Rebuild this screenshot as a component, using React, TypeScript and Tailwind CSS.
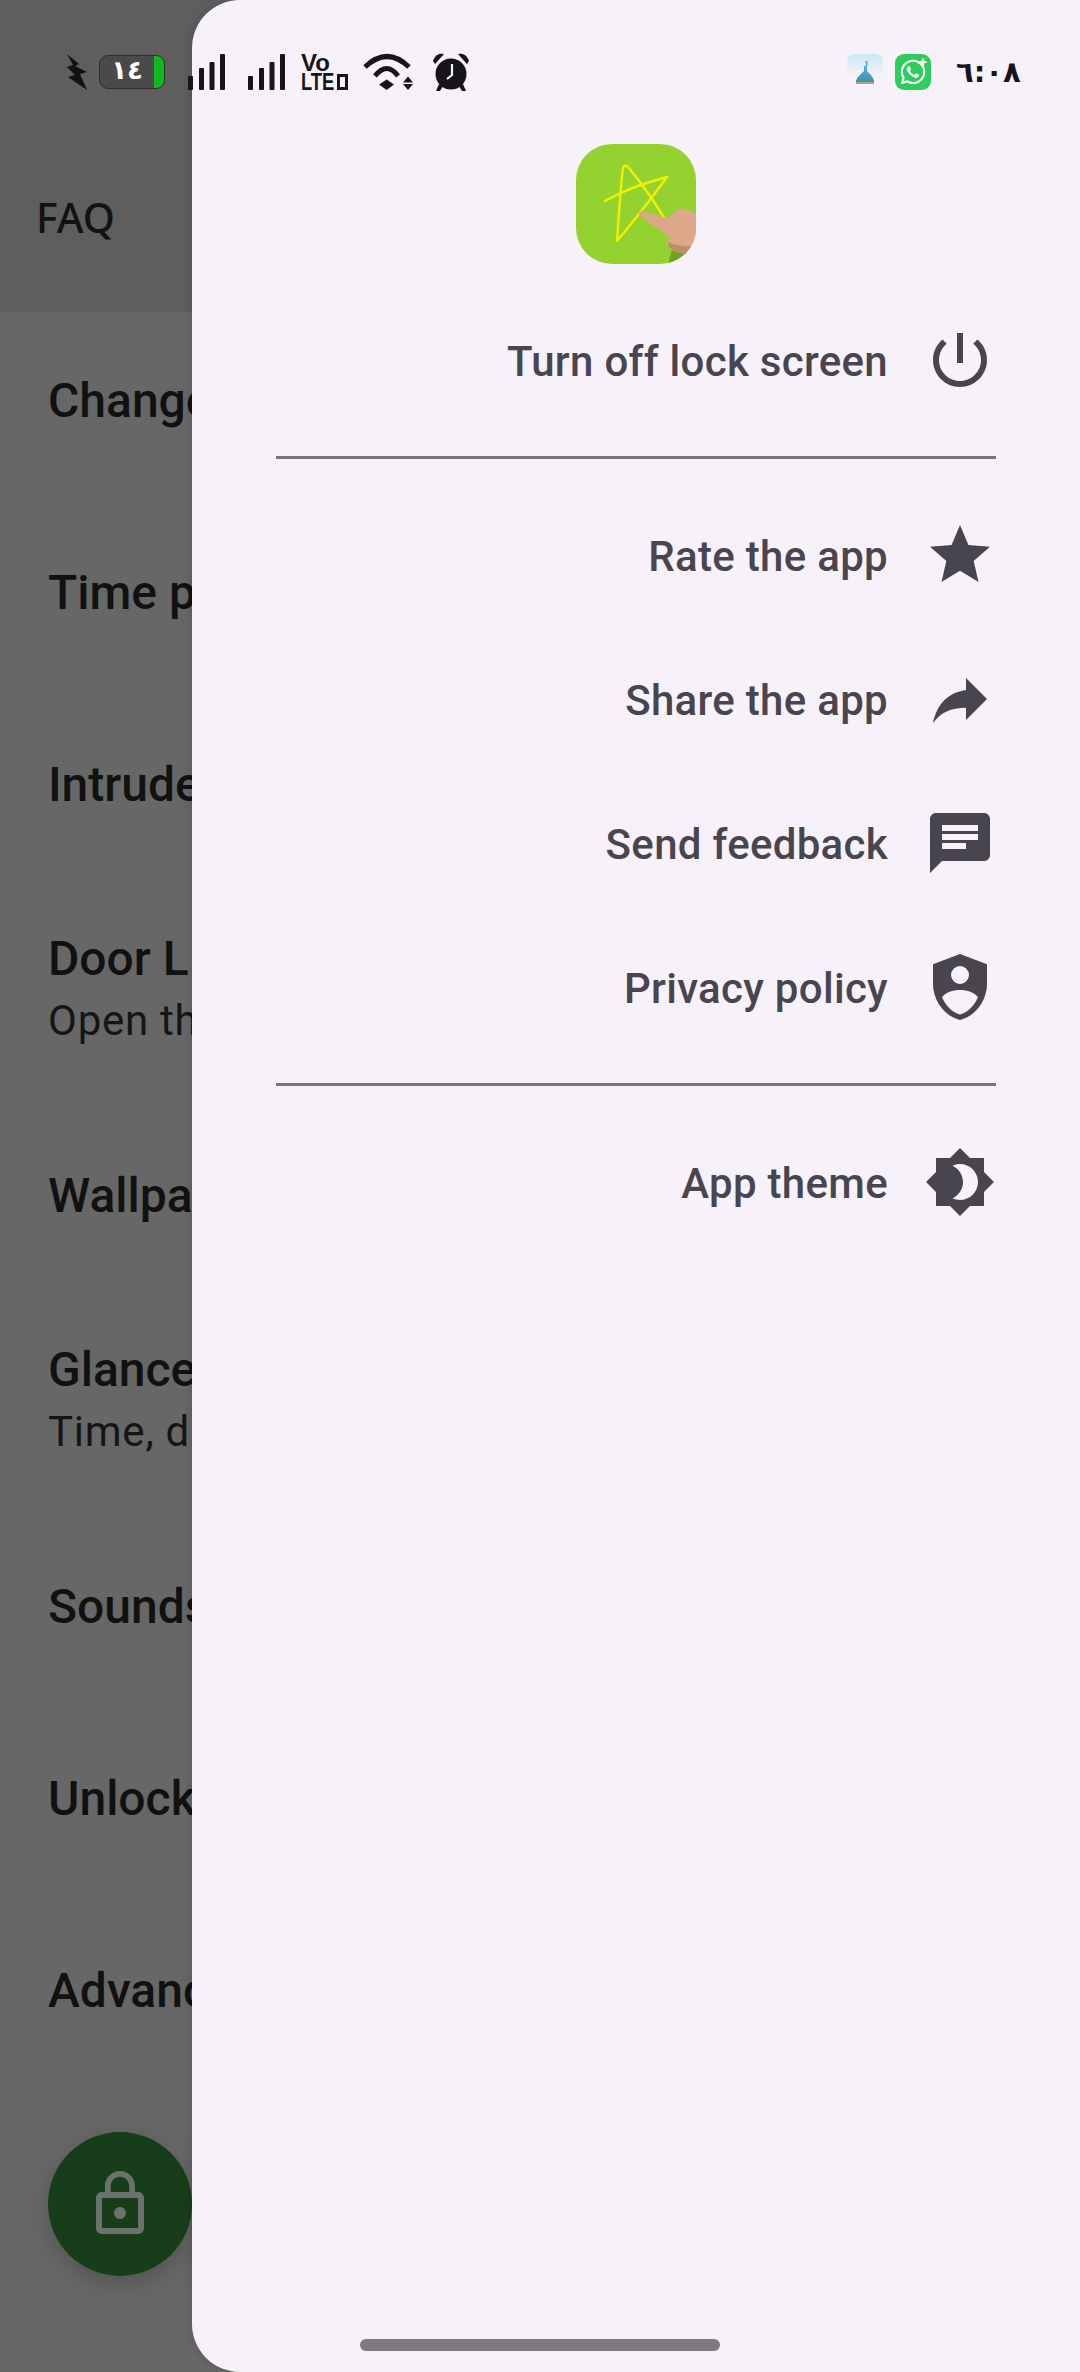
import { FaWhatsapp } from 'react-icons/fa'

const rows = [
  { title: 'Change' },
  { title: 'Time p' },
  { title: 'Intrude' },
  { title: 'Door L', sub: 'Open th' },
  { title: 'Wallpa' },
  { title: 'Glance', sub: 'Time, da' },
  { title: 'Sounds' },
  { title: 'Unlock' },
  { title: 'Advanc' },
]

function MenuIcon({ d, rule }: { d: string; rule?: 'evenodd' }) {
  return (
    <svg width="72" height="72" viewBox="0 0 24 24" fill="#49454f" fillRule={rule} className="shrink-0">
      <path d={d} />
    </svg>
  )
}

const menuTop = { label: 'Turn off lock screen', d: 'M13 3h-2v10h2V3zm4.83 2.17l-1.42 1.42C17.99 7.86 19 9.81 19 12c0 3.87-3.13 7-7 7s-7-3.13-7-7c0-2.19 1.01-4.14 2.58-5.42L6.17 5.17C4.23 6.82 3 9.26 3 12c0 4.97 4.03 9 9 9s9-4.03 9-9c0-2.74-1.23-5.18-3.17-6.83z' }

const menuMiddle = [
  { label: 'Rate the app', d: 'M12 17.27L18.18 21l-1.64-7.03L22 9.24l-7.19-.61L12 2 9.19 8.63 2 9.24l5.46 4.73L5.82 21z' },
  { label: 'Share the app', d: 'M14 9V5l7 7-7 7v-4.1c-5 0-8.5 1.6-11 5.1 1-5 4-10 11-11z' },
  { label: 'Send feedback', d: 'M20 2H4c-1.1 0-1.99.9-1.99 2L2 22l4-4h14c1.1 0 2-.9 2-2V4c0-1.1-.9-2-2-2zM6 9h12v2H6V9zm8 5H6v-2h8v2zm4-6H6V6h12v2z' },
  { label: 'Privacy policy', rule: 'evenodd' as const, d: 'M12 1 3 4.4V11c0 5.5 3.8 10.7 9 12 5.2-1.3 9-6.5 9-12V4.4L12 1zM12 5a3 3 0 1 1 0 6 3 3 0 0 1 0-6zM12 13c2.5 0 4.7.9 6 2.3-1.1 2.8-3.3 5-6 5.9-2.7-.9-4.9-3.1-6-5.9 1.3-1.4 3.5-2.3 6-2.3z' },
]

const menuBottom = { label: 'App theme', d: 'M20 8.69V4h-4.69L12 .69 8.69 4H4v4.69L.69 12 4 15.31V20h4.69L12 23.31 15.31 20H20v-4.69L23.31 12 20 8.69zM12 18c-.89 0-1.74-.2-2.5-.55C11.56 16.5 13 14.42 13 12s-1.44-4.5-3.5-5.45C10.26 6.2 11.11 6 12 6c3.31 0 6 2.69 6 6s-2.69 6-6 6z' }

function MenuRow({ label, d, rule }: { label: string; d: string; rule?: 'evenodd' }) {
  return (
    <div className="flex h-[144px] items-center justify-end gap-[36px]">
      <span className="pt-[3px] text-[42px] leading-none font-medium tracking-[0.3px] text-[#49454f]">{label}</span>
      <MenuIcon d={d} rule={rule} />
    </div>
  )
}

function Signal() {
  return (
    <svg width="38" height="36" viewBox="0 0 38 36" fill="#17151a" className="shrink-0">
      <rect x="0" y="22" width="5" height="14" rx="1" />
      <rect x="11" y="14" width="5" height="22" rx="1" />
      <rect x="21.5" y="8" width="5" height="28" rx="1" />
      <rect x="32" y="0" width="5" height="36" rx="1" />
    </svg>
  )
}

function Logo() {
  return (
    <svg width="120" height="120" viewBox="0 0 120 120">
      <defs>
        <clipPath id="logoClip">
          <rect width="120" height="120" rx="36" />
        </clipPath>
      </defs>
      <g clipPath="url(#logoClip)">
        <rect width="120" height="120" fill="#93d22f" />
        <path d="M92 120 96 106 120 112V120Z" fill="#4f7a18" opacity="0.55" />
        <path
          d="M29 57C48 46 72 38 91 33 75 55 57 78 41 97 43 72 44 45 47 24 48 21 51 21 53 24 66 40 78 57 89 75"
          fill="none"
          stroke="#f2f000"
          strokeWidth="2.4"
          strokeLinecap="round"
          strokeLinejoin="round"
        />
        <path
          d="M63 69C64 67 67 67 71 68 78 70 86 73 92 74 97 70 101 65 106 65 112 65 117 67 120 70V104C117 110 113 112 109 110 103 109 96 106 92 102 89 98 90 96 95 95L84 86C77 81 71 77 66 73 63 72 62 70 63 69Z"
          fill="#dfa78a"
        />
        <path d="M92 102C96 106 103 109 109 110 113 112 117 110 120 104V100C113 104 102 102 92 98Z" fill="#c08a6d" />
      </g>
    </svg>
  )
}

function StatusBar() {
  return (
    <div className="absolute inset-x-0 top-[53px] flex h-[38px] items-center pl-[66px] pr-[62px] text-[#17151a]">
      {/* charging bolt */}
      <svg width="21" height="36" viewBox="0 0 21 36" fill="#111" className="shrink-0">
        <path d="M1 0 13 10 9 12 21 18 14 20 21 36 2 23 9 21 1 13 7 11Z" />
      </svg>
      {/* battery */}
      <div className="relative ml-[12px] flex h-[34px] w-[66px] shrink-0 overflow-hidden rounded-[9px] border border-[#2e2e2e] bg-[#4a4a4a]">
        <span className="flex-1 text-center font-['DejaVu_Sans',sans-serif] text-[26px] leading-[29px] font-bold text-white">١٤</span>
        <span className="w-[10px] bg-[#12b821]" />
      </div>
      <div className="ml-[23px]">
        <Signal />
      </div>
      <div className="ml-[22px]">
        <Signal />
      </div>
      {/* volte */}
      <div className="ml-[15px] flex w-[47px] shrink-0 flex-col font-['Liberation_Sans',sans-serif] font-bold">
        <span className="text-[24px] leading-[20px]">Vo</span>
        <div className="flex items-center">
          <span className="inline-block w-[36px] origin-left scale-x-[0.8] text-[23px] leading-[18px] whitespace-nowrap">LTE</span>
          <span className="h-[16px] w-[11px] border-[3px] border-[#17151a]" />
        </div>
      </div>
      {/* wifi */}
      <svg width="52" height="38" viewBox="0 0 52 38" className="ml-[14px] shrink-0">
        <path d="M3 14Q25-7 47 14" fill="none" stroke="#17151a" strokeWidth="5" />
        <path d="M13 23Q25 8 36 23" fill="none" stroke="#17151a" strokeWidth="5" />
        <path d="M17 31.5 24.7 26.5 32 31.5 24.7 37Z M41 29.5 46 23.5 51 29.5Z M41 31 51 31 46 37Z" fill="#17151a" />
      </svg>
      {/* alarm */}
      <svg width="38" height="38" viewBox="0 0 38 38" className="ml-[18px] shrink-0">
        <circle cx="19" cy="21" r="15.5" fill="#17151a" />
        <path d="M1 8C3 2 7 0 12 1L3 11ZM37 8C35 2 31 0 26 1L35 11Z" fill="#17151a" />
        <path d="M7 31 4 38H8L11 33ZM31 31 34 38H30L27 33Z" fill="#17151a" />
        <path d="M20 11V22L15 26" fill="none" stroke="#f7f2f9" strokeWidth="2.2" />
      </svg>
      <div className="flex-1" />
      {/* mosque notification */}
      <svg width="36" height="36" viewBox="0 0 36 36" className="shrink-0">
        <defs>
          <linearGradient id="sky" x1="0" y1="0" x2="0" y2="1">
            <stop offset="0" stopColor="#c9e9f7" />
            <stop offset="0.7" stopColor="#f7f2f9" />
          </linearGradient>
          <linearGradient id="dome" x1="0" y1="0" x2="0" y2="1">
            <stop offset="0" stopColor="#58b4d8" />
            <stop offset="1" stopColor="#3d8fae" />
          </linearGradient>
        </defs>
        <rect width="36" height="32" rx="8" fill="url(#sky)" />
        <path d="M19 7C21 10 20 12 18 13" fill="none" stroke="#5aa8c9" strokeWidth="1.4" />
        <path d="M17 12H20V17C24 21 27 24 27 28H9C9 24 13 21 17 17Z" fill="url(#dome)" />
        <rect x="9" y="28" width="18" height="2" fill="#b8a25e" />
      </svg>
      {/* whatsapp notification */}
      <div className="relative ml-[12px] flex h-[36px] w-[36px] shrink-0 items-center justify-center rounded-[9px] bg-[#2fce5c] text-white">
        <FaWhatsapp size={28} />
        <span className="absolute top-[1px] right-[4px] text-[15px] leading-none font-bold">+</span>
      </div>
      <span className="ml-[25px] w-[62px] text-center font-['DejaVu_Sans',sans-serif] text-[29px] leading-none font-bold tracking-[-1px] whitespace-nowrap text-[#17151a]">٦:٠٨</span>
    </div>
  )
}

export default function App() {
  return (
    <div className="relative h-[2372px] w-[1080px] overflow-hidden bg-[#676767] font-['Roboto',sans-serif]">
      {/* page behind the drawer */}
      <div className="relative flex h-[312px] items-center bg-[#5e5e5e] pt-[122px] pl-[36px]">
        <span className="font-['Noto_Sans',sans-serif] text-[41px] leading-none font-[530] text-[#121212]">FAQ</span>
      </div>
      <div className="-mt-[9px]">
        {rows.map((r) => (
          <div key={r.title} className={`flex flex-col justify-center pt-[3px] pl-[48px] ${r.sub ? 'h-[219px]' : 'h-[192px]'}`}>
            <span className="text-[48px] leading-[62px] font-medium whitespace-nowrap text-[#111111]">{r.title}</span>
            {r.sub && <span className="text-[42px] leading-[62px] tracking-[0.75px] whitespace-nowrap text-[#151515]">{r.sub}</span>}
          </div>
        ))}
      </div>

      {/* lock fab */}
      <div className="absolute top-[2132px] left-[48px] flex h-[144px] w-[144px] items-center justify-center rounded-full bg-[#173d1a] shadow-[0_8px_24px_rgba(0,0,0,0.18)]">
        <svg width="72" height="72" viewBox="0 0 24 24" fill="#6b726d">
          <path d="M12 17c1.1 0 2-.9 2-2s-.9-2-2-2-2 .9-2 2 .9 2 2 2zm6-9h-1V6c0-2.76-2.24-5-5-5S7 3.24 7 6v2H6c-1.1 0-2 .9-2 2v10c0 1.1.9 2 2 2h12c1.1 0 2-.9 2-2V10c0-1.1-.9-2-2-2zM8.9 6c0-1.71 1.39-3.1 3.1-3.1s3.1 1.39 3.1 3.1v2H8.9V6zM18 20H6V10h12v10z" />
        </svg>
      </div>

      {/* drawer */}
      <aside className="absolute inset-y-0 right-0 left-[192px] flex flex-col rounded-l-[48px] bg-[#f7f2f9] px-[84px] pt-[144px] shadow-[-2px_0_8px_rgba(0,0,0,0.12)]">
        <div className="flex justify-center">
          <Logo />
        </div>
        <div className="mt-[24px]">
          <MenuRow {...menuTop} />
        </div>
        <div className="my-[24px] h-[3px] bg-[#79757d]" />
        {menuMiddle.map((m) => (
          <MenuRow key={m.label} {...m} />
        ))}
        <div className="my-[24px] h-[3px] bg-[#79757d]" />
        <MenuRow {...menuBottom} />
      </aside>

      {/* home indicator */}
      <div className="absolute top-[2339px] left-[360px] h-[12px] w-[360px] rounded-full bg-[#7c7a80]" />

      <StatusBar />
    </div>
  )
}
